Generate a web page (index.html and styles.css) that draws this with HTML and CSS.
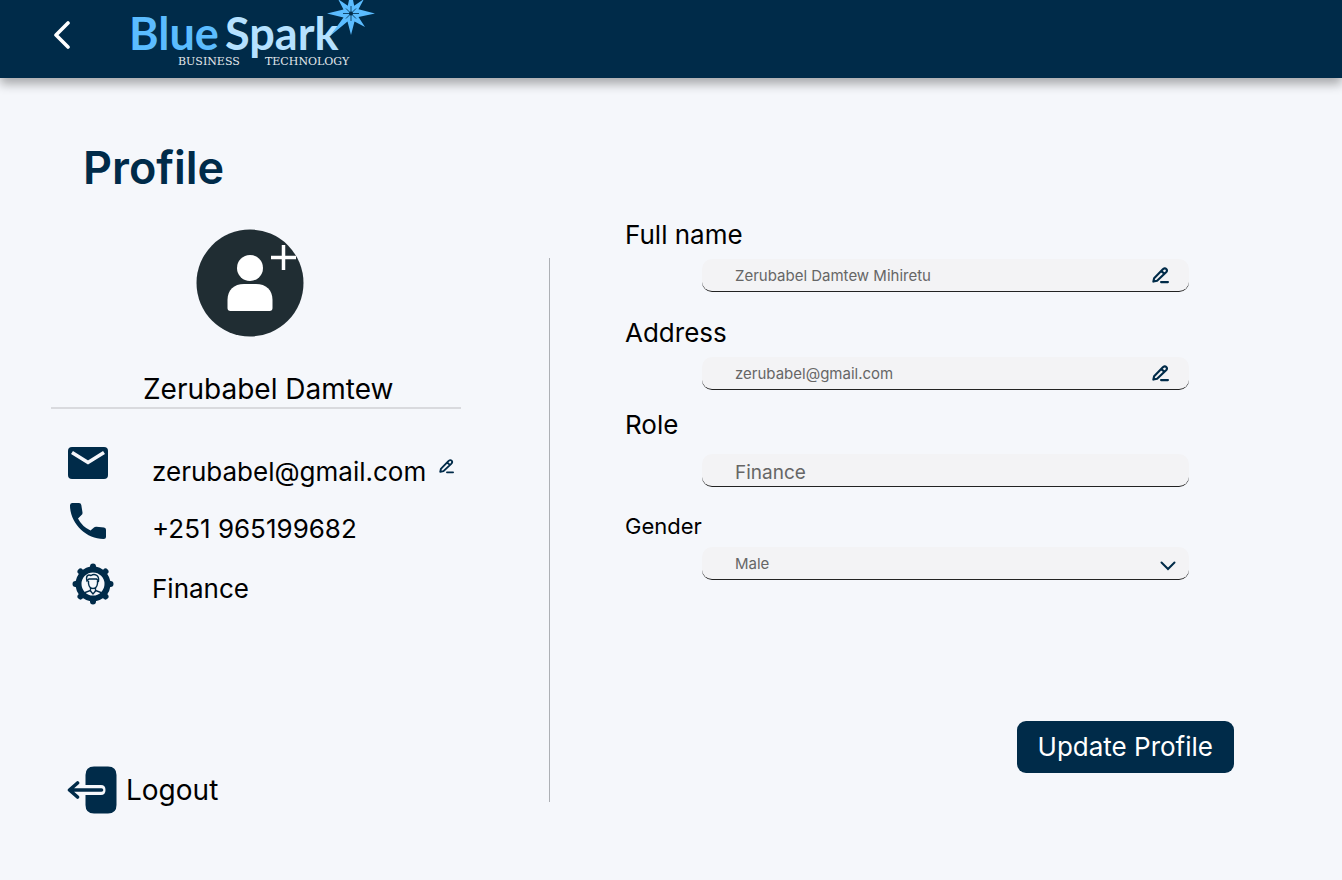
FILE: index.html
```html
<!DOCTYPE html>
<html lang="en">
<head>
<meta charset="utf-8">
<meta name="viewport" content="width=device-width, initial-scale=1">
<title>Profile</title>
<link rel="stylesheet" href="styles.css">
</head>
<body>
<svg class="sprite" width="0" height="0" aria-hidden="true">
  <symbol id="pen" viewBox="0 0 16 16">
    <path d="M1.300 13.700 2 10.600 10 2.300C11.200 1 12.600 1 13.400 1.800S14.200 4 13 5.200L4.800 13Z M9.300 4.300 11.300 6" fill="none" stroke="currentColor" stroke-width="2" stroke-linejoin="round"/>
    <path d="M8.500 14.200H15" fill="none" stroke="currentColor" stroke-width="2" stroke-linecap="round"/>
  </symbol>
</svg>
<header class="topbar">
  <button class="icon-button back" type="button" aria-label="Back">
    <svg width="18" height="28" viewBox="0 0 18 28"><path d="M15 2 3 14 15 26" fill="none" stroke="#fff" stroke-width="3.600" stroke-linecap="round" stroke-linejoin="round"/></svg>
  </button>
  <svg class="logo" width="252" height="78" viewBox="-6 0 252 78" role="img" aria-label="Blue Spark Business Technology">
    <text class="logo-name logo-blue" x="-4" y="50">Blue</text>
    <text class="logo-name logo-pale" x="92" y="50">Spark</text>
    <text class="logo-tag" x="45" y="65">BUSINESS</text>
    <text class="logo-tag" x="132" y="65">TECHNOLOGY</text>
    <path fill="#5bbcff" d="M218-10 221.200 5.800 231-1 225.500 9.200 242 13.500 225.500 17 232 27 221.500 21.500 218 35 214.500 21.500 197 36 210.500 17.500 194 13.500 210.500 9.500 205-1 214.800 5.800Z"/>
    <path d="M218 6V21M210 13.500H226M213 8.500 223 18.500M223 8.500 213 18.500" stroke="#002b49" stroke-width=".8"/>
    <circle cx="218" cy="13.500" r="2" fill="#002b49"/>
  </svg>
</header>
<main class="page">
  <h1 class="title">Profile</h1>
  <div class="columns">
    <section class="summary" aria-label="Account">
      <button class="icon-button avatar" type="button" aria-label="Add photo">
        <svg width="108" height="108" viewBox="0 0 108 108">
          <circle cx="54" cy="54" r="53.500" fill="#202d33"/>
          <circle cx="54" cy="39" r="13" fill="#fff"/>
          <path d="M31.500 77V71C31.500 61 38 55 48 55H60C70 55 76.500 61 76.500 71V79Q76.500 82 73.500 82H34.500Q31.500 82 31.500 79Z" fill="#fff"/>
          <path d="M87.500 16V41M75 28.500H100" stroke="#fff" stroke-width="3.500"/>
        </svg>
      </button>
      <h2 class="name">Zerubabel Damtew</h2>
      <ul class="contacts">
        <li class="contact">
          <span class="contact-icon"><svg width="42" height="34" viewBox="0 0 42 34"><rect x="1" y="1" width="40" height="32" rx="4" fill="#002b49"/><path d="M5 6.500 21 16.500 37 6.500" fill="none" stroke="#f5f7fb" stroke-width="3.600"/></svg></span>
          <span class="contact-text">zerubabel@gmail.com</span>
          <button class="icon-button edit-email" type="button" aria-label="Edit email"><svg width="15" height="15"><use href="#pen"/></svg></button>
        </li>
        <li class="contact">
          <span class="contact-icon phone-icon"><svg width="38" height="38" viewBox="0 0 38 38"><path d="M3 0H10Q12 0 12.300 2L13.500 9.500Q13.700 11 12.500 12L9 15.500Q13 23.500 21.500 27.500L25 24.500Q26 23.500 27.500 23.700L35 24.500Q37 24.700 37 26.700V33.500Q37 36 34.500 36C17 36 1 20 1 2.500Q1 0 3 0Z" fill="#002b49"/></svg></span>
          <span class="contact-text">+251 965199682</span>
        </li>
        <li class="contact contact-role">
          <span class="contact-icon role-icon"><svg width="42" height="42" viewBox="0 0 42 42">
            <circle cx="21" cy="21" r="14.500" fill="none" stroke="#002b49" stroke-width="6"/>
            <path d="M21 3.500V6M21 36V38.500M3.500 21H6M36 21H38.500M8.500 8.500 10 10M32 32 33.500 33.500M33.500 8.500 32 10M8.500 33.500 10 32" stroke="#002b49" stroke-width="6" stroke-linecap="round"/>
            <path d="M15 18C13.500 13 16 11 19 12.500 22 10.500 27.500 11.500 26.500 18L24.500 16H17ZM16.500 18V20.500C17 24 19 25.500 21 25.500S25 24 25.500 20.500V18M18.500 25V27.500L13 29.500V31M23.500 25V27.500L29 29.500V31M18.500 28 21 31 23.500 28" fill="none" stroke="#002b49" stroke-width="1.400"/>
          </svg></span>
          <span class="contact-text">Finance</span>
        </li>
      </ul>
      <button class="logout" type="button">
        <svg width="50" height="48" viewBox="0 0 50 48">
          <path d="M27 .500H41Q49.500 .500 49.500 9V39Q49.500 47.500 41 47.500H27Q18.500 47.500 18.500 39V29H34Q38.500 29 38.500 24T34 19H18.500V9Q18.500 .500 27 .500Z" fill="#002b49"/>
          <path d="M34.500 24H3M10.500 17 2.500 24 10.500 31" fill="none" stroke="#002b49" stroke-width="3.600" stroke-linecap="round" stroke-linejoin="round"/>
        </svg>
        <span>Logout</span>
      </button>
    </section>
    <form class="details">
      <div class="row">
        <label class="label" for="fullname">Full name</label>
        <div class="field">
          <input class="control" id="fullname" type="text" value="Zerubabel Damtew Mihiretu">
          <button class="icon-button" type="button" aria-label="Edit full name"><svg width="17" height="17"><use href="#pen"/></svg></button>
        </div>
      </div>
      <div class="row">
        <label class="label" for="address">Address</label>
        <div class="field">
          <input class="control" id="address" type="text" value="zerubabel@gmail.com">
          <button class="icon-button" type="button" aria-label="Edit address"><svg width="17" height="17"><use href="#pen"/></svg></button>
        </div>
      </div>
      <div class="row row-role">
        <label class="label" for="role">Role</label>
        <div class="field">
          <input class="control control-large" id="role" type="text" value="Finance">
        </div>
      </div>
      <div class="row row-gender">
        <label class="label label-small" for="gender">Gender</label>
        <div class="field field-select">
          <select class="control" id="gender"><option>Male</option><option>Female</option></select>
          <svg class="chevron" width="16" height="10" viewBox="0 0 16 10" aria-hidden="true"><path d="M1.500 1.500 8 8 14.500 1.500" fill="none" stroke="#002b49" stroke-width="2" stroke-linecap="round"/></svg>
        </div>
      </div>
      <button class="submit" type="submit">Update Profile</button>
    </form>
  </div>
</main>
</body>
</html>
```
FILE: styles.css
```css
* {
  box-sizing: border-box;
}

body {
  margin: 0;
  background: #f5f7fb;
  color: #000;
  font-family: Inter, "Liberation Sans", sans-serif;
}

button,
input,
select {
  font: inherit;
}

.sprite {
  position: absolute;
}

.icon-button {
  display: flex;
  padding: 0;
  border: 0;
  background: none;
  color: #002b49;
  cursor: pointer;
}

.topbar {
  display: flex;
  align-items: center;
  gap: 56px;
  height: 78px;
  padding-left: 53px;
  background: #002b49;
  box-shadow: 0 6px 10px rgba(0, 0, 0, 0.32);
}

.back {
  padding-bottom: 9px;
}

.logo-name {
  font-family: Lato, sans-serif;
  font-size: 45px;
  font-weight: 700;
}

.logo-blue {
  fill: #5bbcff;
}

.logo-pale {
  fill: #b5e1ff;
}

.logo-tag {
  fill: #e3e8ec;
  font-family: "DejaVu Serif", serif;
  font-size: 11px;
}

.page {
  padding: 60px 108px 40px 51px;
}

.title {
  margin: 0 0 21px 32px;
  color: #002b49;
  font-size: 45px;
  font-weight: 600;
  line-height: 60px;
}

.columns {
  display: grid;
  grid-template-columns: minmax(410px, 498fr) minmax(500px, 685fr);
}

.summary {
  display: flex;
  flex-direction: column;
  margin: 10px 88px 0 0;
}

.avatar {
  align-self: center;
  margin-right: 12px;
}

.name {
  margin: 34px 0 0;
  padding: 0 0 0 92px;
  border-bottom: 2px solid #d9dade;
  font-size: 28px;
  font-weight: 400;
  line-height: 36px;
}

.contacts {
  display: grid;
  gap: 13px;
  margin: 37px 0 0;
  padding: 0 0 0 16px;
  list-style: none;
}

.contact {
  display: flex;
}

.contact-role {
  margin-top: 3px;
}

.contact-icon {
  width: 85px;
}

.phone-icon {
  padding-left: 2px;
}

.role-icon {
  padding-left: 5px;
}

.contact-text {
  padding-top: 8px;
  font-size: 26px;
  line-height: 36px;
}

.edit-email {
  align-self: flex-start;
  margin: 13px 0 0 13px;
}

.logout {
  display: flex;
  align-items: center;
  align-self: flex-start;
  gap: 9px;
  margin: 157px 0 0 16px;
  padding: 0;
  border: 0;
  background: none;
  color: #000;
  font-size: 28px;
  cursor: pointer;
}

.details {
  display: flex;
  flex-direction: column;
  align-self: start;
  padding-left: 76px;
  position: relative;
}

.details::before {
  content: "";
  position: absolute;
  top: 39px;
  bottom: -29px;
  left: 0;
  width: 1px;
  background: #adb0b5;
}

.row {
  display: grid;
  gap: 8px;
  margin-bottom: 25px;
}

.row-role {
  gap: 13px;
  margin: -6px 0 23px;
}

.row-gender {
  gap: 5px;
  margin-bottom: 141px;
}

.label {
  font-size: 26px;
  line-height: 32px;
}

.label-small {
  font-size: 22px;
}

.field {
  display: flex;
  align-items: center;
  height: 33px;
  margin: 0 45px 0 77px;
  padding: 0 20px 0 33px;
  border-bottom: 1px solid #222;
  border-radius: 10px;
  background: #f3f3f5;
}

.control {
  flex: 1;
  min-width: 0;
  padding: 0;
  border: 0;
  background: none;
  color: #666;
  font-size: 15px;
  appearance: none;
}

.control-large {
  padding-top: 4px;
  font-size: 19px;
}

.field-select {
  position: relative;
}

.chevron {
  position: absolute;
  top: 14px;
  right: 13px;
  pointer-events: none;
}

.submit {
  align-self: flex-end;
  padding: 8px 21px;
  border: 0;
  border-radius: 9px;
  background: #002b49;
  color: #fff;
  font-size: 26px;
  line-height: 36px;
  cursor: pointer;
}
```
